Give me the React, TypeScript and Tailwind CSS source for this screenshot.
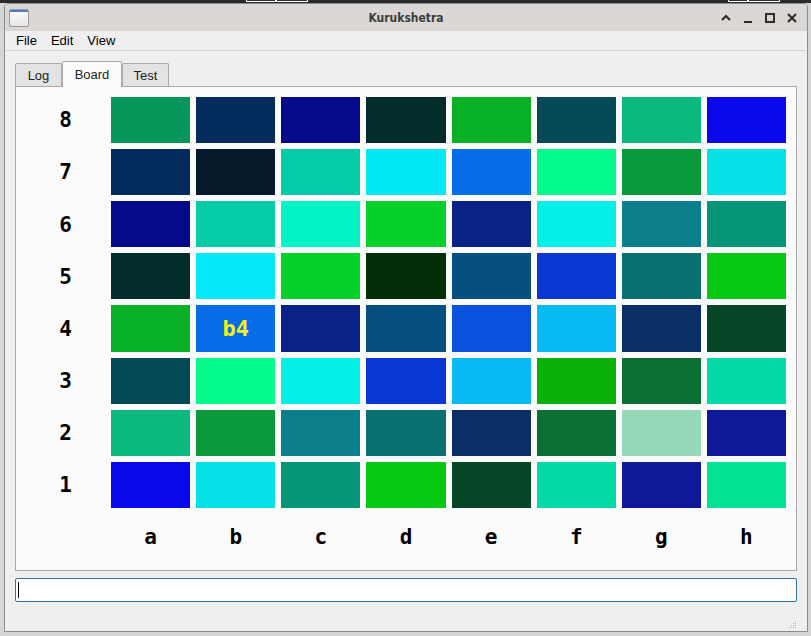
import React from 'react';

const ROWS: string[][] = [
    ['#07965a', '#032b5e', '#050a88', '#032d2a', '#07b024', '#044a56', '#0bb87e', '#0808ea'],
    ['#032b5e', '#061a2c', '#03cca6', '#03e8f6', '#066ce8', '#04fb8c', '#0a9a3c', '#04e2e8'],
    ['#050a88', '#03cca6', '#04f4c8', '#06d02a', '#0a2288', '#04f0e6', '#0c808a', '#049676'],
    ['#032d2a', '#04e8fa', '#06d02a', '#032e08', '#05507e', '#0a36d4', '#0a7070', '#07c812'],
    ['#07b024', '#066ce8', '#0a2288', '#05507e', '#0a52de', '#08baf4', '#0b2e66', '#074626'],
    ['#044a56', '#04fb8c', '#04f0e6', '#0a36d4', '#08baf4', '#08b008', '#0b7034', '#04daa8'],
    ['#0bb87e', '#0a9a3c', '#0c808a', '#0a7070', '#0b2e66', '#0b7034', '#94d8b8', '#10189a'],
    ['#0808ea', '#04e2e8', '#049676', '#07c812', '#074626', '#04daa8', '#10189a', '#04e294'],
];

const FILES = ['a', 'b', 'c', 'd', 'e', 'f', 'g', 'h'];

function Board() {
    return (
        <div className="grid h-full grid-cols-9 grid-rows-9 gap-[6px] p-[10px] font-bold text-black [font-family:'DejaVu_Sans_Mono',monospace]">
            {ROWS.map((row, r) => (
                <React.Fragment key={r}>
                    <div className="flex items-center justify-center pt-[2px] text-[21px]">
                        {8 - r}
                    </div>
                    {row.map((color, c) => {
                        const label = FILES[c] + (8 - r);
                        return (
                            <div
                                key={c}
                                className="flex items-center justify-center"
                                style={{ backgroundColor: color }}
                            >
                                {label === 'b4' && (
                                    <span className="text-[22px] text-[#f4f40e]">
                                        b4
                                    </span>
                                )}
                            </div>
                        );
                    })}
                </React.Fragment>
            ))}
            <div />
            {FILES.map((f) => (
                <div key={f} className="flex items-center justify-center pt-[2px] text-[21px]">
                    {f}
                </div>
            ))}
        </div>
    );
}

export default function App() {
    return (
        <div className="flex h-[636px] w-[811px] flex-col overflow-hidden bg-[#d6d6d6] font-['Liberation_Sans',sans-serif]">
            {/* desktop strip behind the window */}
            <div className="flex h-[3px] shrink-0 bg-[#2a2a2a]">
                <div className="ml-[246px] h-[2px] w-[30px] border border-t-0 border-white" />
                <div className="h-[2px] w-[32px] border border-t-0 border-white" />
                <div className="ml-[420px] h-[2px] w-[20px] border border-t-0 border-white" />
                <div className="h-[2px] w-[32px] border border-t-0 border-white" />
            </div>

            <div className="ml-[4px] mr-[3px] flex h-[629px] flex-col overflow-hidden rounded-t-[4px] border border-[#8c8c8c] bg-[#efefef]">
                {/* title bar */}
                <div className="relative flex h-[27px] shrink-0 items-center bg-[#dbd7d4] px-[2px]">
                    <div className="ml-[2px] h-[18px] w-[20px] overflow-hidden rounded-[2px] border border-[#9a9a9a] bg-gradient-to-b from-white to-[#e4e4e4]">
                        <div className="h-[2px] bg-[#4f7ec4]" />
                    </div>
                    <div className="absolute inset-x-0 top-0 flex h-full items-center justify-center text-[12px] font-bold text-[#3c3c3c] [font-family:'DejaVu_Sans_Condensed','DejaVu_Sans',sans-serif]">
                        Kurukshetra
                    </div>
                    <div className="ml-auto flex items-center gap-[8px] pr-[6px] text-[#2e2e2e]">
                        <svg width="14" height="14" viewBox="0 0 14 14">
                            <path d="M3 9 L7 5 L11 9" stroke="currentColor" strokeWidth="2.2" fill="none" />
                        </svg>
                        <svg width="14" height="14" viewBox="0 0 14 14">
                            <path d="M3 11 H11" stroke="currentColor" strokeWidth="2.2" />
                        </svg>
                        <svg width="14" height="14" viewBox="0 0 14 14">
                            <rect x="3" y="3" width="8" height="8" stroke="currentColor" strokeWidth="2" fill="none" />
                        </svg>
                        <svg width="14" height="14" viewBox="0 0 14 14">
                            <path d="M3 3 L11 11 M11 3 L3 11" stroke="currentColor" strokeWidth="2.2" />
                        </svg>
                    </div>
                </div>

                {/* menu bar */}
                <div className="mx-[1px] flex h-[20px] shrink-0 items-center gap-[14px] border-b border-[#d4d4d4] px-[10px] text-[13px] text-black">
                    <span>File</span>
                    <span>Edit</span>
                    <span>View</span>
                </div>

                <div className="flex flex-1 flex-col px-[10px] pt-[10px]">
                    {/* tabs */}
                    <div className="flex h-[25px] items-end text-[13px] text-[#222]">
                        <div className="flex h-[23px] w-[47px] items-center justify-center rounded-t-[2px] border border-b-0 border-[#ababab] bg-[#e3e3e3] pt-[2px]">
                            Log
                        </div>
                        <div className="relative -mb-px flex h-[26px] w-[60px] items-center justify-center rounded-t-[2px] border border-b-0 border-[#ababab] bg-[#fbfbfb]">
                            Board
                        </div>
                        <div className="flex h-[23px] w-[47px] items-center justify-center rounded-t-[2px] border border-b-0 border-[#ababab] bg-[#e3e3e3] pt-[2px]">
                            Test
                        </div>
                    </div>
                    <div className="h-[485px] border border-[#a8a8a8] bg-[#fbfbfb]">
                        <Board />
                    </div>

                    <div className="mt-[7px] flex h-[24px] items-center rounded-[2px] border border-[#2f72ab] bg-white px-[2px]">
                        <div className="h-[16px] w-px bg-black" />
                    </div>

                    <div className="mt-auto flex justify-end pb-[2px]">
                        <svg width="10" height="10" viewBox="0 0 10 10">
                            <g fill="#b0b0b0">
                                <rect x="8" y="2" width="1" height="1" />
                                <rect x="6" y="4" width="1" height="1" />
                                <rect x="8" y="4" width="1" height="1" />
                                <rect x="4" y="6" width="1" height="1" />
                                <rect x="6" y="6" width="1" height="1" />
                                <rect x="8" y="6" width="1" height="1" />
                                <rect x="2" y="8" width="1" height="1" />
                                <rect x="4" y="8" width="1" height="1" />
                                <rect x="6" y="8" width="1" height="1" />
                                <rect x="8" y="8" width="1" height="1" />
                            </g>
                        </svg>
                    </div>
                </div>
            </div>
        </div>
    );
}
